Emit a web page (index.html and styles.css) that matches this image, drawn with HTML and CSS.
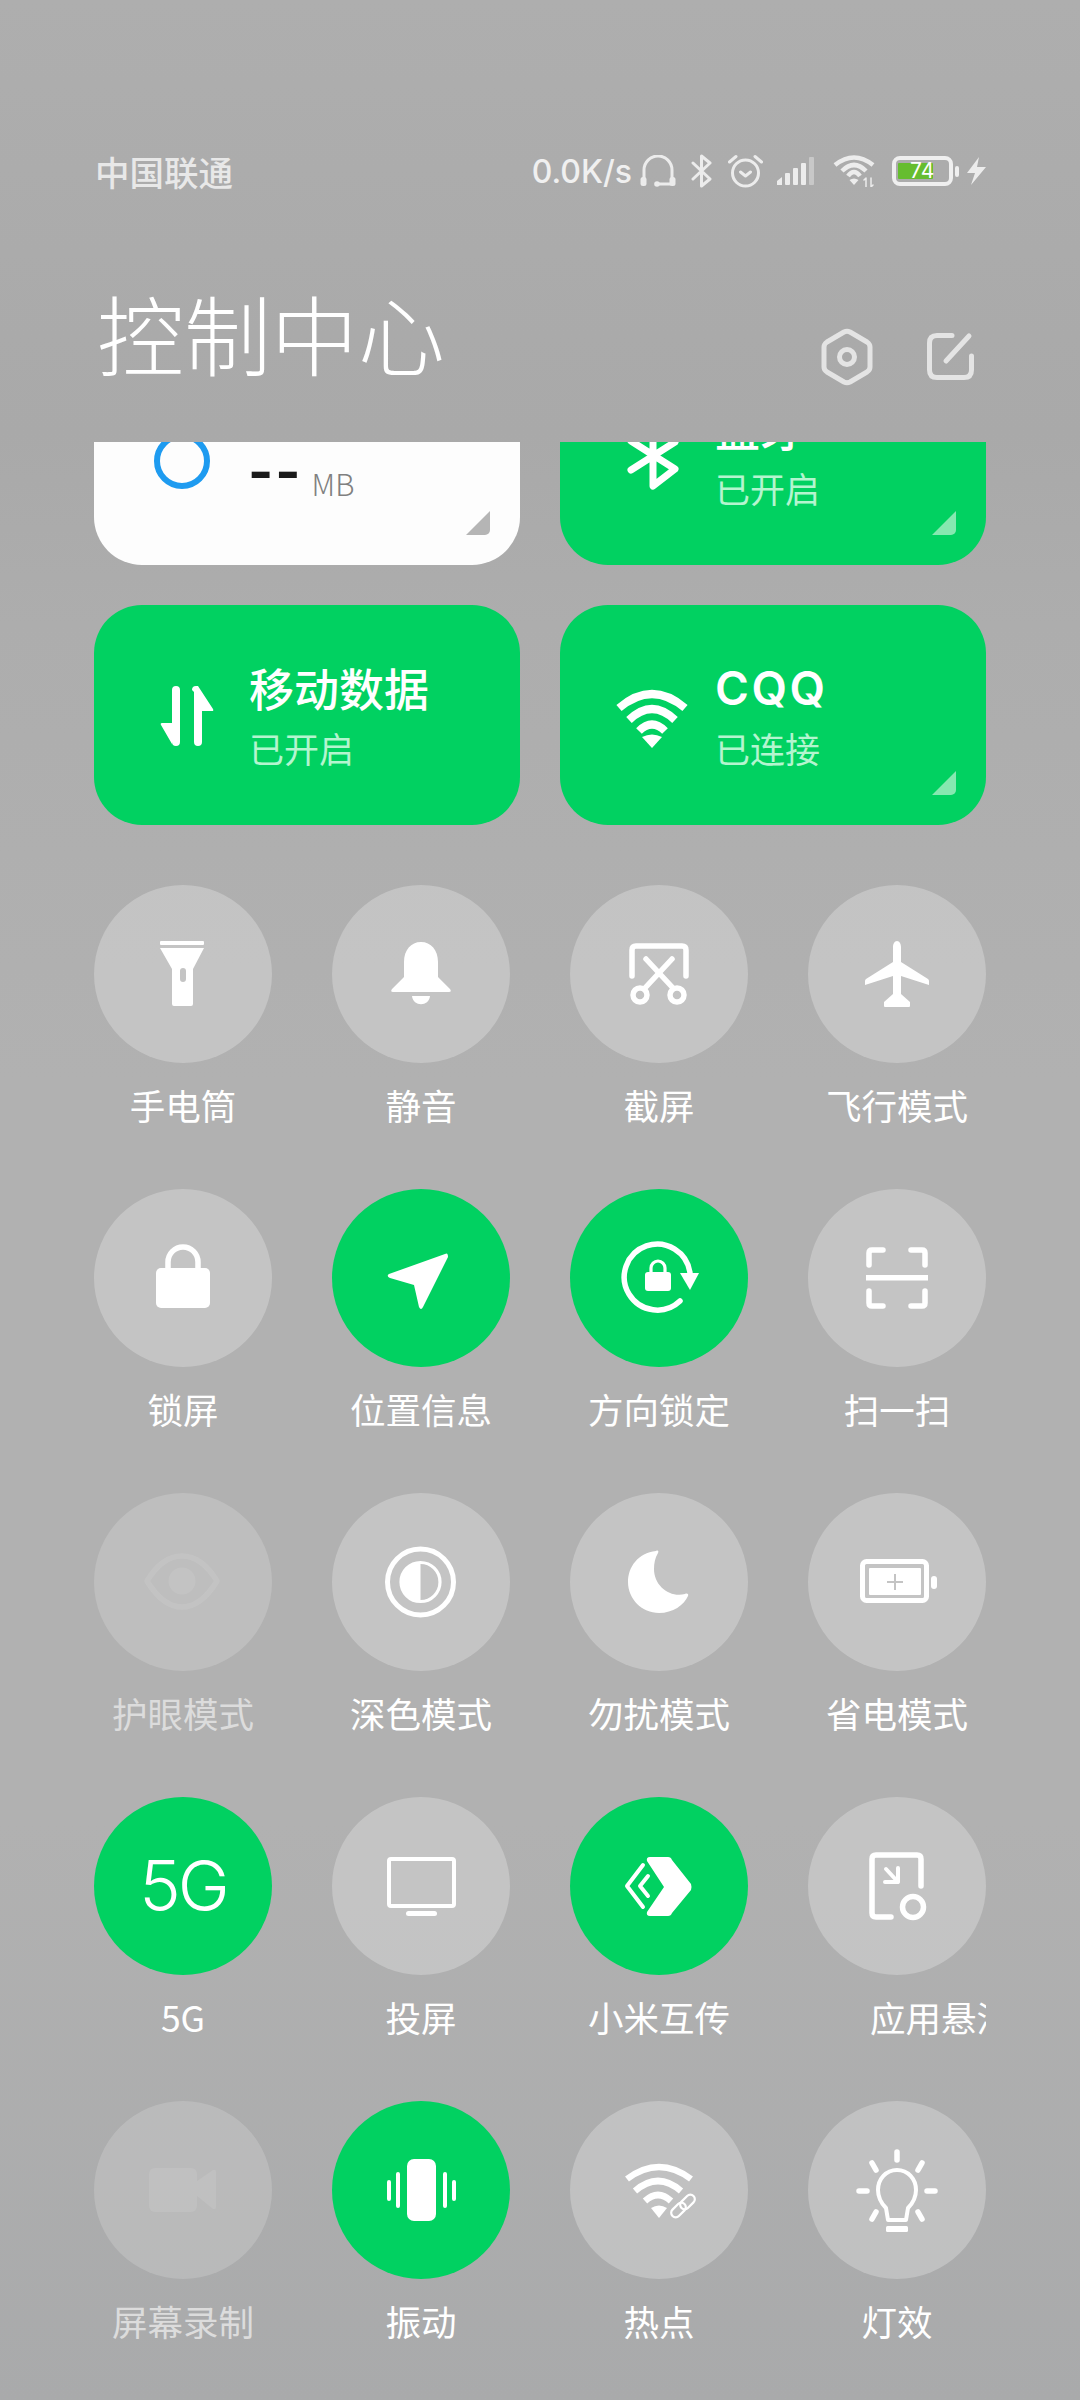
FILE: index.html
```html
<!DOCTYPE html>
<html lang="zh-CN">
<head>
<meta charset="utf-8">
<title>控制中心</title>
<link rel="stylesheet" href="styles.css">
</head>
<body>
<div class="page">
  <header class="status">
    <span class="carrier">中国联通</span>
    <div class="status-right">
      <span class="speed">0.0K/s</span>
      <svg class="si si-head" viewBox="0 0 36 32"><path class="sl" d="M4 26V15a14 14 0 0 1 28 0V26"/><rect class="sf" x="0.500" y="22" width="6" height="9" rx="2.500"/><rect class="sf" x="29.500" y="22" width="6" height="9" rx="2.500"/><path class="sl" d="M17 29H30"/><circle class="sf" cx="17" cy="29" r="2.800"/></svg>
      <svg class="si si-bt" viewBox="0 0 21 34"><path class="sl" d="M2 9L19 25L10.500 32V2L19 9L2 25"/></svg>
      <svg class="si si-alarm" viewBox="0 0 35 34"><circle class="sl" cx="17.500" cy="19" r="13"/><path class="sl" d="M1.500 8L8 2.500M33.500 8L27 2.500M12.500 18L17.500 22L22.500 18"/></svg>
      <svg class="si si-signal" viewBox="0 0 40 28"><path class="sf" d="M0 28V24L5 20V28Z"/><rect class="sf" x="8" y="16" width="5" height="12" rx="1"/><rect class="sf" x="16" y="11" width="5" height="17" rx="1"/><rect class="sf" x="24" y="6" width="5" height="22" rx="1"/><rect class="sf dim" x="32" y="0" width="5" height="28" rx="1"/></svg>
      <svg class="si si-wifi" viewBox="0 0 42 32"><path class="sw" d="M2 10Q21 -5 40 10M9 16Q21 4 33 16M15 21Q21 13 27 21"/><path class="sf" d="M16.500 25Q21 22 25.500 25L21 30Z"/><path class="sl thin" d="M33 23V32M31 25L33 23M38 23V32L40 30"/></svg>
      <div class="batt"><div class="batt-box"><span class="batt-fill"></span><span class="batt-num">74</span></div><span class="batt-nub"></span></div>
      <svg class="si si-bolt" viewBox="0 0 19 28"><path class="sf" d="M12 0L0 16H8L4 28L19 10H10Z"/></svg>
    </div>
  </header>

  <div class="head">
    <h1 class="title">控制中心</h1>
    <div class="head-icons">
      <svg class="hi-hex" viewBox="0 0 52 58"><path d="M23 4Q26 2.500 29 4L46 14Q49 16 49 19V39Q49 42 46 44L29 54Q26 55.500 23 54L6 44Q3 42 3 39V19Q3 16 6 14Z"/><circle cx="26" cy="29" r="7.500"/></svg>
      <svg class="hi-edit" viewBox="0 0 48 50"><path d="M25 3.500H10Q2.500 3.500 2.500 11V38Q2.500 45.500 10 45.500H37Q44.500 45.500 44.500 38V24M19 29L42 4"/></svg>
    </div>
  </div>

  <main class="scroll">
    <section class="cards">
      <div class="card card-white">
        <svg class="card-icon" viewBox="0 0 60 66"><circle class="ring" cx="26" cy="39" r="25"/></svg>
        <div class="card-text data-text"><span class="dash">--</span><span class="unit">MB</span></div>
        <i class="corner"></i>
      </div>
      <div class="card">
        <svg class="card-icon" viewBox="0 0 60 66"><path class="cl" d="M9 19L53 47L31 64V3L53 20L9 48"/></svg>
        <div class="card-text"><div class="card-title">蓝牙</div><div class="card-sub">已开启</div></div>
        <i class="corner"></i>
      </div>
      <div class="card">
        <svg class="card-icon" viewBox="0 0 60 66"><path class="cf" d="M16 8a4 4 0 0 1 8 0V60a4 4 0 0 1-8 0V62L5 43Q4 41 6 41H16Z"/><path class="cf" d="M36 8Q36 4 40 4H42L57 27Q58 29 56 29H46V60a4 4 0 0 1-8 0V10Z"/></svg>
        <div class="card-text"><div class="card-title">移动数据</div><div class="card-sub">已开启</div></div>
      </div>
      <div class="card">
        <svg class="card-icon card-wifi" viewBox="0 0 76 60"><path class="cw" d="M5 20Q38 -8 71 20M15 32Q38 10 61 32M25 43Q38 30 51 43"/><path class="cf" d="M28 49Q38 44 48 49L38 60Z"/></svg>
        <div class="card-text"><div class="card-title latin">CQQ</div><div class="card-sub">已连接</div></div>
        <i class="corner"></i>
      </div>
    </section>

    <section class="tiles">
      <div class="tile"><div class="circle"><svg viewBox="0 0 178 178"><rect class="f" x="66" y="56" width="44" height="4" rx="1"/><path class="f" fill-rule="evenodd" d="M66 63H110L99 84V119a2 2 0 0 1-2 2H80a2 2 0 0 1-2-2V84ZM86 86V94a3 3 0 0 0 6 0V86a3 3 0 0 0-6 0Z"/></svg></div><div class="label">手电筒</div></div>
      <div class="tile"><div class="circle"><svg viewBox="0 0 178 178"><path class="f" d="M89 57C79 57 72 65 72 77V92L60 104Q58 107 61 107H117Q120 107 118 104L106 92V77C106 65 99 57 89 57Z"/><path class="f" d="M80 111H98C97 122 81 122 80 111Z"/></svg></div><div class="label">静音</div></div>
      <div class="tile"><div class="circle"><svg viewBox="0 0 178 178"><path class="s" d="M62 91V65Q62 61 66 61H112Q116 61 116 65V91"/><path class="s" d="M76 74L103 103M102 74L75 103"/><circle class="s" cx="70" cy="110" r="7"/><circle class="s" cx="107" cy="110" r="7"/></svg></div><div class="label">截屏</div></div>
      <div class="tile"><div class="circle"><svg viewBox="0 0 178 178"><path class="f" d="M89 56C86.500 56 85 59 85 62V77L58 94Q57 95 57 96V100L85 91V109L76 117V121Q76 122 77 122H101Q102 122 102 121V117L93 109V91L121 100V96Q121 95 120 94L93 77V62C93 59 91.500 56 89 56Z"/></svg></div><div class="label">飞行模式</div></div>

      <div class="tile"><div class="circle"><svg viewBox="0 0 178 178"><path class="s" d="M74 80V73a15 15 0 0 1 30 0V80"/><rect class="f" x="62" y="79" width="54" height="40" rx="5"/></svg></div><div class="label">锁屏</div></div>
      <div class="tile"><div class="circle on"><svg viewBox="0 0 178 178"><path class="f" d="M113 65L57 85Q54 87 58 89L82 96L87 118Q89 122 91 118L116 68Q116 63 113 65Z"/></svg></div><div class="label">位置信息</div></div>
      <div class="tile"><div class="circle on"><svg viewBox="0 0 178 178"><path class="s" d="M110 112A33 33 0 1 1 120 84"/><path class="f" d="M110 84H129L120 101Z"/><path class="s3" d="M81 84V79a7 7 0 0 1 14 0V84"/><rect class="f" x="75" y="83" width="26" height="19" rx="3"/></svg></div><div class="label">方向锁定</div></div>
      <div class="tile"><div class="circle"><svg viewBox="0 0 178 178"><path class="s" d="M61 76V64Q61 61 64 61H75M103 61H114Q117 61 117 64V76M61 102V114Q61 117 64 117H75M103 117H114Q117 117 117 114V102"/><rect class="f" x="58" y="86" width="62" height="5.500"/></svg></div><div class="label">扫一扫</div></div>

      <div class="tile off"><div class="circle"><svg viewBox="0 0 178 178"><path class="s" d="M53 88C64 70 75 63 88 63C101 63 112 70 123 88C112 106 101 114 88 114C75 114 64 106 53 88Z"/><circle class="f" cx="88" cy="88" r="13.500"/></svg></div><div class="label">护眼模式</div></div>
      <div class="tile"><div class="circle"><svg viewBox="0 0 178 178"><circle class="s5" cx="88.500" cy="89" r="33"/><circle class="s3" cx="88.500" cy="89" r="19.500"/><path class="f" d="M88.500 69.500A19.500 19.500 0 0 0 88.500 108.500Z"/></svg></div><div class="label">深色模式</div></div>
      <div class="tile"><div class="circle"><svg viewBox="0 0 178 178"><path class="f" d="M86 58C68 60 58 74 58 89C58 106 72 120 89 120C103 120 114 112 118 103C119 101 117 100 115 101C100 105 84 93 84 76C84 70 85 65 88 60C89 58 88 57 86 58Z"/></svg></div><div class="label">勿扰模式</div></div>
      <div class="tile"><div class="circle"><svg viewBox="0 0 178 178"><rect class="s5" x="54.500" y="68.500" width="64" height="39" rx="4"/><rect class="f" x="61" y="75" width="52" height="27" rx="1"/><rect class="f" x="123" y="83" width="6" height="13" rx="3"/><path class="hole" d="M79 89H95M87 81V97"/></svg></div><div class="label">省电模式</div></div>

      <div class="tile"><div class="circle on"><span class="five-g">5G</span></div><div class="label">5G</div></div>
      <div class="tile"><div class="circle"><svg viewBox="0 0 178 178"><rect class="s4" x="57" y="62" width="65" height="47" rx="2"/><rect class="f" x="74" y="114" width="31" height="5" rx="2.500"/></svg></div><div class="label">投屏</div></div>
      <div class="tile"><div class="circle on"><svg viewBox="0 0 178 178"><path class="f" d="M80 60H98Q101 60 102 63L121 87Q122 90 121 93L102 116Q101 119 98 119H80Q76 119 77 115L94 90L77 64Q76 60 80 60Z"/><path class="s4" d="M73 68L57 89L73 110M78 79L70 89L78 99"/></svg></div><div class="label">小米互传</div></div>
      <div class="tile"><div class="circle"><svg viewBox="0 0 178 178"><path class="s" d="M113 89V62Q113 58 109 58H68Q64 58 64 62V116Q64 120 68 120H83"/><circle class="s" cx="105" cy="110" r="10.500"/><path class="s4" d="M78 72L90 85M90 71V85H77"/></svg></div><div class="label label-cut">应用悬浮窗</div></div>

      <div class="tile off"><div class="circle"><svg viewBox="0 0 178 178"><rect class="f" x="55" y="67" width="48" height="44" rx="6"/><path class="f" d="M103 80L119 69Q122 68 122 71V106Q122 109 119 108L103 95Z"/></svg></div><div class="label">屏幕录制</div></div>
      <div class="tile"><div class="circle on"><svg viewBox="0 0 178 178"><rect class="f" x="75" y="58" width="29" height="62" rx="7"/><path class="s4" d="M66 73V105M113 73V105M57 81V98M122 81V98"/></svg></div><div class="label">振动</div></div>
      <div class="tile"><div class="circle"><svg viewBox="0 0 178 178"><path class="w" d="M57 78Q89 54 121 78M65 90Q88 70 111 90M75 100Q88 88 101 100"/><path class="f" d="M81 107Q89 102 97 107L89 117Z"/><rect class="link" x="-4.500" y="-8.500" width="9" height="17" rx="4.500" transform="translate(108.500 109) rotate(45)"/><rect class="link" x="-4.500" y="-8.500" width="9" height="17" rx="4.500" transform="translate(117.500 101) rotate(45)"/></svg></div><div class="label">热点</div></div>
      <div class="tile"><div class="circle"><svg viewBox="0 0 178 178"><path class="s" d="M89 51V59M64 62L68 69M114 62L110 69M51 90H59M119 90H127M64 118L68 111M114 118L110 111"/><path class="s4" d="M80 119L78 107C72 101 70 96 70 89C70 78 78 69 89 69C100 69 108 78 108 89C108 96 106 101 100 107L98 119Z"/><rect class="f" x="78" y="125" width="22" height="6" rx="1.500"/></svg></div><div class="label">灯效</div></div>
    </section>
  </main>
</div>
</body>
</html>
```
FILE: styles.css
```css
* { box-sizing: border-box; }
html, body { margin: 0; padding: 0; }
body {
  width: 1080px;
  height: 2400px;
  overflow: hidden;
  font-family: "Noto Sans CJK SC", "Noto Sans", sans-serif;
  color: #fff;
}
.page {
  width: 1080px;
  height: 2400px;
  display: flex;
  flex-direction: column;
  background: linear-gradient(180deg, #aeaeae 0%, #aaaaaa 14%, #a9a9a9 18%, #adadad 26%, #b1b1b1 45%, #b1b1b1 76%, #a9aaab 100%);
}

/* status bar */
.status {
  height: 40px;
  margin-top: 151px;
  padding: 0 94px 0 95px;
  display: flex;
  align-items: center;
  justify-content: space-between;
}
.carrier { font-size: 34.500px; line-height: 40px; font-weight: 500; color: #e8e8e8; }
.status-right { display: flex; align-items: center; }
.speed { font-family: Inter, sans-serif; font-size: 32px; font-weight: 500; color: #f0f0f0; margin-right: 8px; }
.si { display: block; flex: none; }
.si-head { width: 36px; height: 32px; margin-right: 15px; }
.si-bt { width: 21px; height: 34px; margin-right: 16px; }
.si-alarm { width: 35px; height: 34px; margin-right: 14px; }
.si-signal { width: 40px; height: 28px; margin-right: 16px; }
.si-wifi { width: 42px; height: 32px; margin-right: 17px; }
.si-bolt { width: 19px; height: 28px; margin-left: 8px; }
.sl { fill: none; stroke: #ececec; stroke-width: 3; stroke-linecap: round; stroke-linejoin: round; }
.sl.thin { stroke-width: 1.500; }
.sw { fill: none; stroke: #ececec; stroke-width: 4.500; }
.sf { fill: #ececec; }
.sf.dim { fill: #c8c8c8; }
.batt { display: flex; align-items: center; }
.batt-box {
  position: relative;
  width: 61px;
  height: 30px;
  border: 4px solid #efefef;
  border-radius: 8px;
}
.batt-fill { position: absolute; left: 2px; top: 3px; width: 35px; height: 16px; background: #66bd2f; border-radius: 1px; }
.batt-num { position: absolute; left: 14px; top: -3px; font-family: Inter, sans-serif; font-size: 21px; line-height: 28px; color: #fff; }
.batt-nub { width: 4px; height: 11px; margin-left: 2px; background: #efefef; border-radius: 2px; }

/* title row */
.head {
  height: 251px;
  padding: 0 105px 0 97px;
  display: flex;
  align-items: flex-start;
  justify-content: space-between;
}
.title {
  margin: 91px 0 0;
  font-size: 87px;
  line-height: 100px;
  font-weight: 300;
  color: #fff;
}
.head-icons { display: flex; align-items: center; gap: 54px; margin-top: 137px; }
.head-icons svg { display: block; fill: none; stroke: #e4e4e4; stroke-width: 5; stroke-linecap: round; stroke-linejoin: round; }
.hi-hex { width: 52px; height: 58px; }
.hi-edit { width: 48px; height: 50px; }

/* scrolling area */
.scroll {
  flex: 1;
  margin: 0 94px;
  overflow: hidden;
}
.cards {
  margin-top: -97px;
  display: grid;
  grid-template-columns: 426px 426px;
  grid-auto-rows: 220px;
  gap: 40px;
}
.card {
  position: relative;
  display: flex;
  align-items: center;
  background: #01d161;
  border-radius: 48px;
}
.card-white { background: #fdfdfd; }
.card-icon { flex: none; width: 60px; height: 66px; margin-left: 62px; overflow: visible; }
.card-wifi { width: 76px; height: 60px; margin: 6px -8px 0 54px; }
.card-text { margin-left: 33px; padding-top: 5px; }
.card-title { font-size: 45px; line-height: 60px; font-weight: 500; color: #fff; }
.card-title.latin { font-family: Inter, sans-serif; font-size: 46px; font-weight: 600; letter-spacing: 2.500px; }
.card-sub { font-size: 35px; line-height: 60px; color: #b4f5cf; }
.data-text { display: flex; align-items: baseline; margin-top: 34px; margin-left: 32px; padding-top: 0; }
.dash { font-family: Inter, sans-serif; font-size: 54px; line-height: 60px; font-weight: 700; color: #1a1a1a; letter-spacing: 2px; }
.unit { font-size: 30px; line-height: 40px; margin-left: 9px; font-weight: 300; color: #808080; position: relative; top: 5px; }
.ring { fill: none; stroke: #1e9bf0; stroke-width: 6; }
.cl { fill: none; stroke: #fff; stroke-width: 7; stroke-linecap: round; stroke-linejoin: round; }
.cw { fill: none; stroke: #fff; stroke-width: 8; }
.cf { fill: #fff; }
.corner {
  position: absolute;
  right: 30px;
  bottom: 30px;
  width: 24px;
  height: 24px;
  background: #86e8b0;
  clip-path: polygon(100% 0, 100% 100%, 0 100%);
  border-radius: 0 0 5px 0;
}
.card-white .corner { background: #b5b5b5; }

/* tiles */
.tiles {
  margin-top: 60px;
  display: grid;
  grid-template-columns: repeat(4, 178px);
  column-gap: 60px;
  grid-auto-rows: 304px;
}
.tile { display: flex; flex-direction: column; align-items: center; min-width: 0; }
.circle {
  flex: none;
  width: 178px;
  height: 178px;
  border-radius: 50%;
  background: rgba(255, 255, 255, 0.25);
  display: flex;
  align-items: center;
  justify-content: center;
}
.circle.on { background: #01d161; }
.circle svg { display: block; width: 178px; height: 178px; }
.label {
  width: 178px;
  margin-top: 18px;
  font-size: 35.500px;
  line-height: 48px;
  text-align: center;
  white-space: nowrap;
  color: #fff;
}
.label-cut { text-align: left; padding-left: 62px; overflow: hidden; }
.f { fill: #fff; }
.s, .s3, .s4, .s5, .hole { fill: none; stroke: #fff; stroke-linecap: round; stroke-linejoin: round; }
.s { stroke-width: 5.500; }
.s5 { stroke-width: 5; }
.s4 { stroke-width: 4; }
.s3 { stroke-width: 3.200; }
.w { fill: none; stroke: #fff; stroke-width: 6.500; }
.link { fill: none; stroke: #fff; stroke-width: 2.200; }
.hole { stroke: #c4c4c4; stroke-width: 2; stroke-linecap: butt; }
.five-g { font-family: Inter, sans-serif; font-size: 70px; font-weight: 300; line-height: 1; letter-spacing: -3px; color: #fff; }
.off .circle { background: rgba(255, 255, 255, 0.17); }
.off .f { fill: rgba(255, 255, 255, 0.09); }
.off .s { stroke: rgba(255, 255, 255, 0.09); }
.off .label { color: #dcdcdc; }
```
